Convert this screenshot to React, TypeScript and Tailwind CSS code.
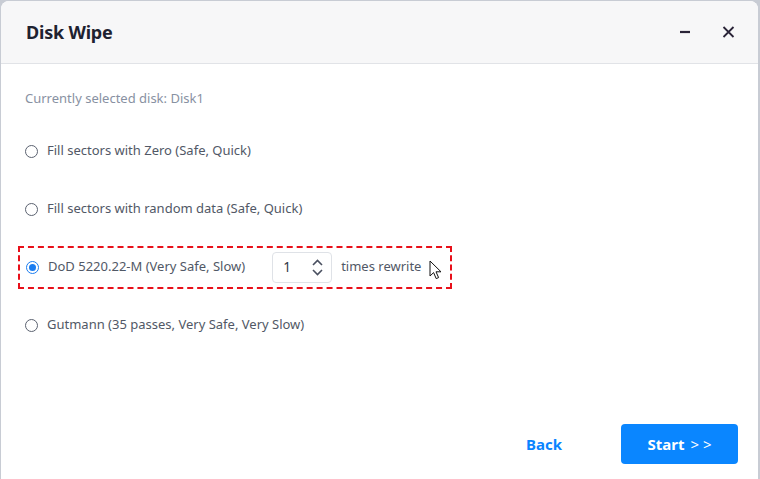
import { useState } from 'react';

const options = [
  'Fill sectors with Zero (Safe, Quick)',
  'Fill sectors with random data (Safe, Quick)',
  'DoD 5220.22-M (Very Safe, Slow)',
  'Gutmann (35 passes, Very Safe, Very Slow)',
];

function Radio({ checked }: { checked: boolean }) {
  return (
    <span
      className={`flex h-[13px] w-[13px] shrink-0 items-center justify-center rounded-full border-[1.5px] ${
        checked ? 'border-[#1a7cf0]' : 'border-[#5b6270]'
      }`}
    >
      {checked && <span className="h-[7px] w-[7px] rounded-full bg-[#1a7cf0]" />}
    </span>
  );
}

export default function App() {
  const [selected, setSelected] = useState(2);
  const [times, setTimes] = useState(1);

  return (
    <div
      className="h-[479px] w-[760px] overflow-hidden bg-[#c8ccd4] pl-px pt-px pr-[2px]"
      style={{ fontFamily: '"Noto Sans", "Open Sans", sans-serif' }}
    >
      <div className="flex h-[490px] flex-col rounded-t-[8px] bg-white">
        <div className="flex h-[63px] shrink-0 items-center justify-between rounded-t-[8px] border-b border-[#e1e3e7] bg-[#f7f7f8] pl-[25px] pr-[23px]">
          <h1 className="text-[18px] font-bold tracking-[-0.2px] text-[#1e2230]">Disk Wipe</h1>
          <div className="flex items-center gap-[31px] text-[#2a2438]">
            <svg width="12" height="14" viewBox="0 0 12 14">
              <path d="M1 7h10" stroke="currentColor" strokeWidth="2.2" />
            </svg>
            <svg width="13" height="14" viewBox="0 0 13 14">
              <path d="M1.5 2l10 10M11.5 2l-10 10" stroke="currentColor" strokeWidth="1.8" />
            </svg>
          </div>
        </div>

        <div className="flex flex-col px-[24px]">
          <p className="mt-[25px] text-[13px] text-[#8891a2]">Currently selected disk: Disk1</p>

          <div className="mt-[21px] flex flex-col gap-[15px]">
            {options.map((label, i) => {
              const checked = selected === i;
              return (
                <div
                  key={label}
                  className={`flex h-[43px] items-center ${
                    i === 2 ? '-mx-[7px] w-[434px] border-2 border-dashed border-[#e8101a] px-[6px]' : ''
                  }`}
                >
                  <label
                    className="flex cursor-pointer items-center gap-[9px] whitespace-nowrap text-[13px] text-[#515866]"
                    onClick={() => setSelected(i)}
                  >
                    <Radio checked={checked} />
                    <span>{label}</span>
                  </label>
                  {i === 2 && (
                    <>
                      <div className="ml-[27px] flex h-[31px] w-[60px] items-center justify-between rounded-[4px] border border-[#dfe2e7] pl-[10px] pr-[8px]">
                        <span className="text-[13.5px] text-[#303644]">{times}</span>
                        <div className="flex flex-col items-center gap-[3px] text-[#4a5060]">
                          <button onClick={() => setTimes(times + 1)}>
                            <svg width="11" height="7" viewBox="0 0 11 7">
                              <path d="M1 6l4.5-4.5L10 6" fill="none" stroke="currentColor" strokeWidth="1.6" />
                            </svg>
                          </button>
                          <button onClick={() => setTimes(Math.max(1, times - 1))}>
                            <svg width="11" height="7" viewBox="0 0 11 7">
                              <path d="M1 1l4.5 4.5L10 1" fill="none" stroke="currentColor" strokeWidth="1.6" />
                            </svg>
                          </button>
                        </div>
                      </div>
                      <span className="ml-[9px] whitespace-nowrap text-[13px] text-[#515866]">times rewrite</span>
                      <svg className="ml-[8px] mt-[6px]" width="14" height="20" viewBox="0 0 14 20">
                        <path
                          d="M1 1v15l3.6-3.4 2.6 6 2.4-1-2.6-5.8H12z"
                          fill="white"
                          stroke="#111"
                          strokeWidth="1"
                          strokeLinejoin="round"
                        />
                      </svg>
                    </>
                  )}
                </div>
              );
            })}
          </div>
        </div>

        <div className="mt-auto mb-[27px] flex items-center justify-end gap-[59px] pr-[20px]">
          <button className="text-[15px] font-bold text-[#0a84ff]">Back</button>
          <button className="flex h-[40px] w-[117px] items-center justify-center gap-[6px] rounded-[4px] bg-[#0a86ff] text-[15px] font-bold text-white">
            Start <span className="font-normal">&gt; &gt;</span>
          </button>
        </div>
      </div>
    </div>
  );
}
